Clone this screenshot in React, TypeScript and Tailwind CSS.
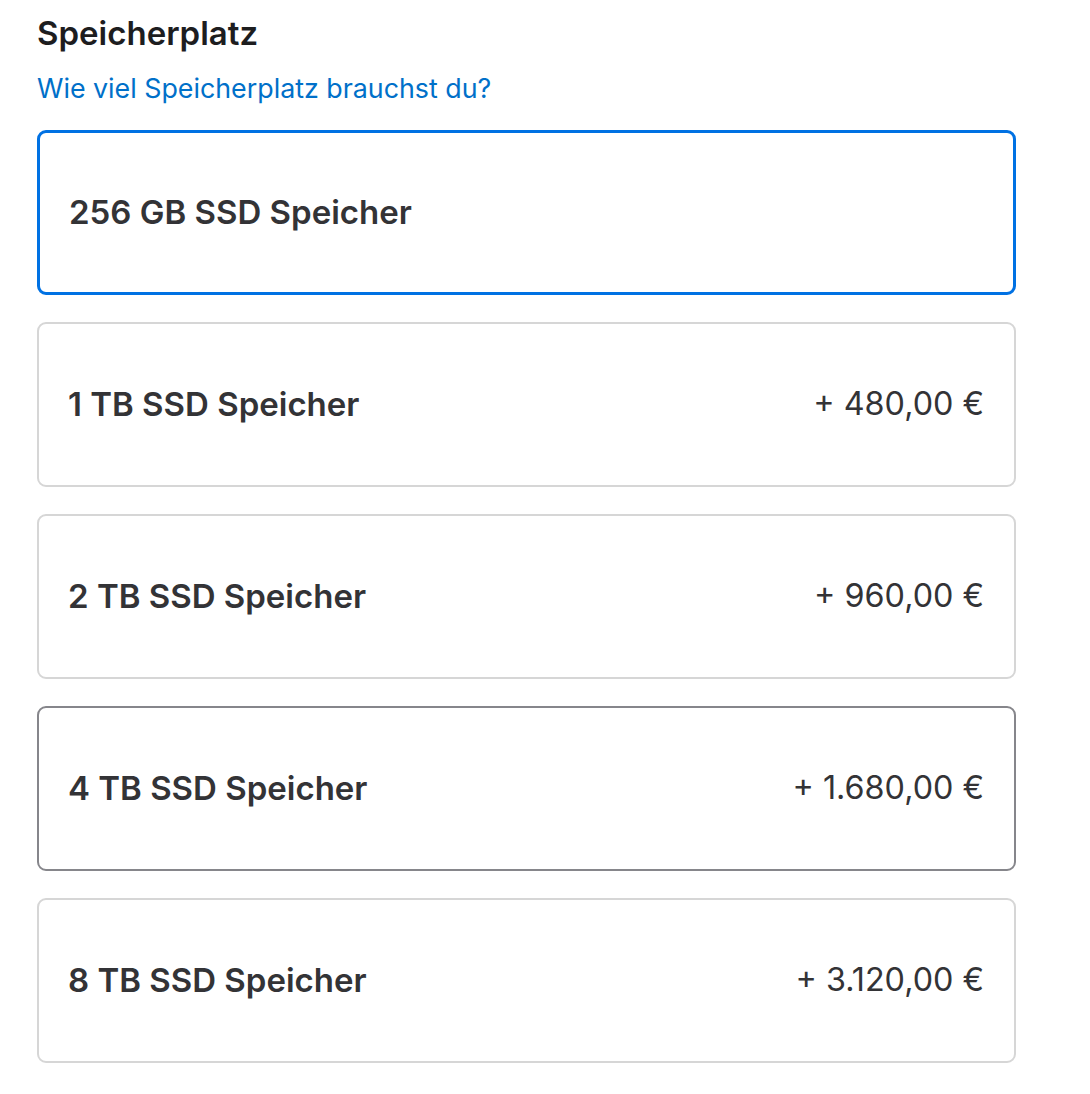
const options = [
  { id: "256gb", label: "256 GB SSD Speicher", price: "" },
  { id: "1tb", label: "1 TB SSD Speicher", price: "+ 480,00 €" },
  { id: "2tb", label: "2 TB SSD Speicher", price: "+ 960,00 €" },
  { id: "4tb", label: "4 TB SSD Speicher", price: "+ 1.680,00 €" },
  { id: "8tb", label: "8 TB SSD Speicher", price: "+ 3.120,00 €" },
];

const selectedId = "256gb";
const hoveredId = "4tb";

function cardClass(id: string) {
  if (id === selectedId) return "border-[3px] border-[#0071e3]";
  if (id === hoveredId) return "border-2 border-[#86868b]";
  return "border-2 border-[#d6d6d6]";
}

export default function App() {
  return (
    <div className="min-h-[1094px] bg-white pl-[37px] pt-[13px] font-['Inter','Liberation_Sans',sans-serif] antialiased">
      <h2 className="text-[33px] font-semibold leading-[40px] text-[#1d1d1f]">Speicherplatz</h2>
      <a href="#" className="mt-[18px] block w-fit text-[26.8px] leading-[34px] text-[#0070c9]">
        Wie viel Speicherplatz brauchst du?
      </a>

      <div className="mt-[25px] flex w-[979px] flex-col gap-[27px]">
        {options.map((option) => (
          <button
            key={option.id}
            type="button"
            className={`flex h-[165px] items-center justify-between rounded-[9px] bg-white pl-[29px] pr-[30px] text-left text-[#333336] ${cardClass(option.id)}`}
          >
            <span className="text-[33px] font-semibold">{option.label}</span>
            {option.price && <span className="text-[32.3px]">{option.price}</span>}
          </button>
        ))}
      </div>
    </div>
  );
}
